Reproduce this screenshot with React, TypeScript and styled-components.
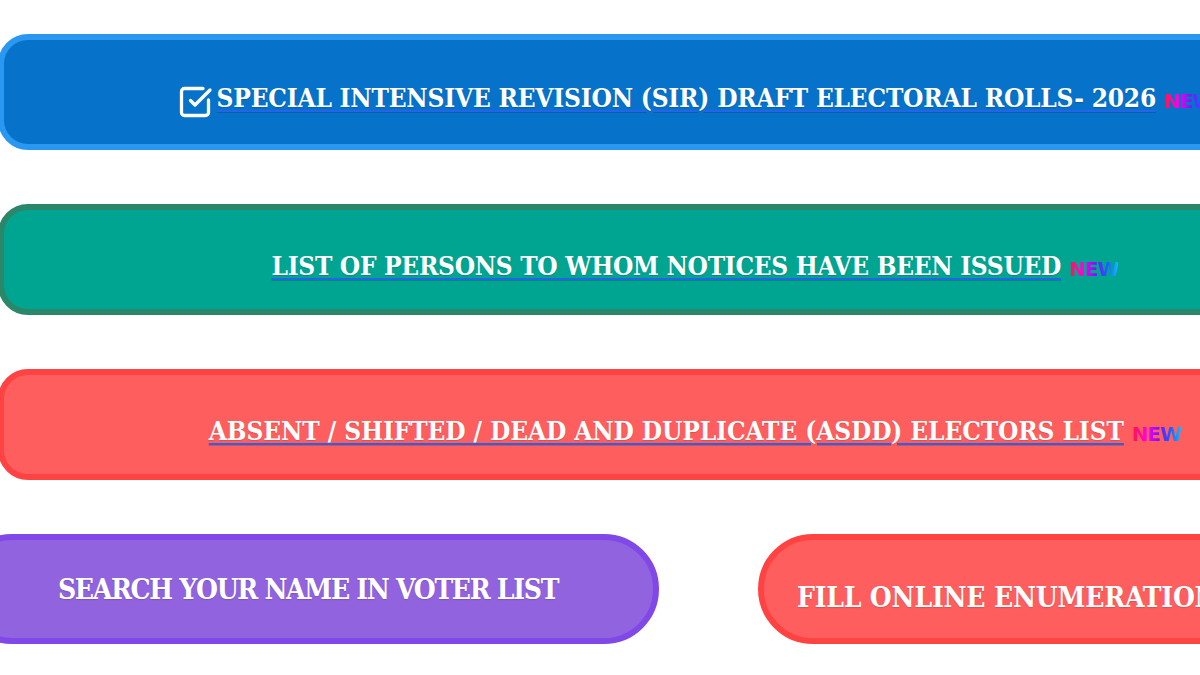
import React from "react";
import styled, { createGlobalStyle } from "styled-components";
import { SquareCheckBig } from "lucide-react";

const Global = createGlobalStyle`
  html, body {
    margin: 0;
    padding: 0;
    background: #ffffff;
    overflow: hidden;
  }
  * { box-sizing: border-box; }
`;

const Page = styled.main`
  width: 1200px;
  height: 675px;
  overflow: hidden;
  display: flex;
  flex-direction: column;
  gap: 54px;
  padding-top: 34px;
`;

const WideButton = styled.a<{ $fill: string; $edge: string; $h: number }>`
  display: flex;
  align-items: center;
  justify-content: center;
  flex-shrink: 0;
  width: 1394px;
  height: ${(p) => p.$h}px;
  margin-left: -2px;
  padding-top: 12px;
  border: 6px solid ${(p) => p.$edge};
  border-radius: 30px;
  background: ${(p) => p.$fill};
  color: #ffffff;
  text-decoration: none;
`;

const Label = styled.span<{ $size?: number; $track?: number }>`
  display: inline-flex;
  align-items: center;
  font-family: "DejaVu Serif Condensed", "DejaVu Serif", "Liberation Serif", serif;
  font-stretch: condensed;
  font-weight: 700;
  font-size: ${(p) => p.$size ?? 26}px;
  letter-spacing: ${(p) => p.$track ?? -0.2}px;
  white-space: nowrap;
  color: #ffffff;
  text-shadow: 0 1px 1px rgba(0, 0, 0, 0.15);
`;

const Underlined = styled.span`
  text-decoration: underline;
  text-decoration-color: #2563eb;
  text-decoration-thickness: 2px;
  text-underline-offset: 3px;
`;

const Icon = styled(SquareCheckBig)`
  margin-right: 4px;
  margin-top: 8px;
  flex-shrink: 0;
`;

const NewBadge = styled.span`
  margin-left: 8px;
  margin-top: 6px;
  font-family: "DejaVu Sans", "Liberation Sans", sans-serif;
  font-stretch: normal;
  font-weight: 700;
  font-size: 20px;
  letter-spacing: -1px;
  background: linear-gradient(90deg, #ff1744 0%, #ff00e6 30%, #7a12ff 55%, #1e5bff 78%, #16b8ff 100%);
  -webkit-background-clip: text;
  background-clip: text;
  color: transparent;
  text-shadow: none;
`;

const Split = styled.div`
  display: grid;
  grid-template-columns: 702px 702px;
  column-gap: 99px;
  margin-left: -43px;
`;

const Pill = styled.a<{ $fill: string; $edge: string; $align: "center" | "flex-start" }>`
  display: flex;
  align-items: center;
  justify-content: ${(p) => p.$align};
  height: 110px;
  padding-left: ${(p) => (p.$align === "flex-start" ? 33 : 0)}px;
  padding-top: ${(p) => (p.$align === "flex-start" ? 16 : 0)}px;
  border: 6px solid ${(p) => p.$edge};
  border-radius: 55px;
  background: ${(p) => p.$fill};
  color: #ffffff;
  text-decoration: none;
`;

const New = () => <NewBadge>NEW</NewBadge>;

export default function App() {
  return (
    <>
      <Global />
      <Page>
        <WideButton href="#" $fill="#0672c9" $edge="#2a98f0" $h={116}>
          <Label>
            <Icon size={36} strokeWidth={2.2} color="#ffffff" />
            <Underlined>SPECIAL INTENSIVE REVISION (SIR) DRAFT ELECTORAL ROLLS- 2026</Underlined>
            <New />
          </Label>
        </WideButton>
        <WideButton href="#" $fill="#00a592" $edge="#2a876a" $h={111}>
          <Label $track={-0.3}>
            <Underlined>LIST OF PERSONS TO WHOM NOTICES HAVE BEEN ISSUED</Underlined>
            <New />
          </Label>
        </WideButton>
        <WideButton href="#" $fill="#ff5e5e" $edge="#ff4343" $h={111}>
          <Label $track={-0.1}>
            <Underlined>ABSENT / SHIFTED / DEAD AND DUPLICATE (ASDD) ELECTORS LIST</Underlined>
            <New />
          </Label>
        </WideButton>
        <Split>
          <Pill href="#" $fill="#9163df" $edge="#8048e8" $align="center">
            <Label $size={28} $track={-1.3}>SEARCH YOUR NAME IN VOTER LIST</Label>
          </Pill>
          <Pill href="#" $fill="#ff5e5e" $edge="#ff4343" $align="flex-start">
            <Label $size={28}>FILL ONLINE ENUMERATION FORM</Label>
          </Pill>
        </Split>
      </Page>
    </>
  );
}
